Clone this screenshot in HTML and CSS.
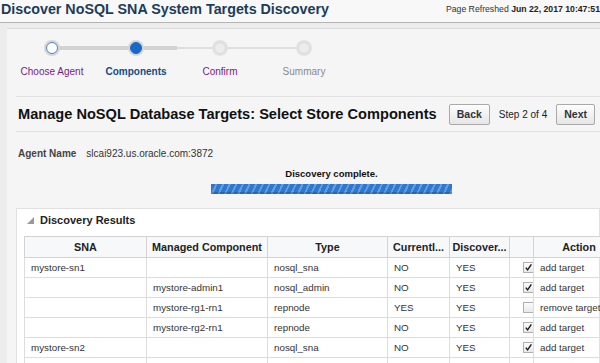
FILE: index.html
```html
<!DOCTYPE html>
<html>
<head>
<meta charset="utf-8">
<link rel="stylesheet" href="styles.css">
</head>
<body>
<div class="topbar">
  <h1 class="title">Discover NoSQL SNA System Targets Discovery</h1>
  <div class="refreshed">Page Refreshed <b>Jun 22, 2017 10:47:51</b></div>
</div>
<div class="content">
  <div class="train">
    <div class="track-done"></div>
    <div class="track-rest"></div>
    <div class="stop visited"><span class="dot"></span><span class="lbl">Choose Agent</span></div>
    <div class="stop current"><span class="dot"></span><span class="lbl">Components</span></div>
    <div class="stop next"><span class="dot"></span><span class="lbl">Confirm</span></div>
    <div class="stop disabled"><span class="dot"></span><span class="lbl">Summary</span></div>
  </div>
  <div class="section">
    <div class="headrow">
      <h2 class="heading">Manage NoSQL Database Targets: Select Store Components</h2>
      <div class="nav">
        <button class="btn">Back</button>
        <span class="step">Step 2 of 4</span>
        <button class="btn">Next</button>
        <button class="btn btn-cut"></button>
      </div>
    </div>
    <div class="agent"><span class="agent-lbl">Agent Name</span><span class="agent-val">slcai923.us.oracle.com:3872</span></div>
    <div class="status">
      <div class="status-text">Discovery complete.</div>
      <div class="bar"></div>
    </div>
  </div>
  <div class="panel">
    <div class="panel-head"><span class="tri"></span>Discovery Results</div>
    <table class="grid">
      <colgroup>
        <col class="c1"><col class="c2"><col class="c3"><col class="c4"><col class="c5"><col class="c6"><col class="c7">
      </colgroup>
      <thead>
        <tr>
          <th>SNA</th><th>Managed Component</th><th>Type</th><th>Currentl...</th><th>Discover...</th><th></th><th>Action</th>
        </tr>
      </thead>
      <tbody>
        <tr><td>mystore-sn1</td><td></td><td>nosql_sna</td><td>NO</td><td>YES</td><td class="cb"><span class="box"><svg viewBox="0 0 11 11"><path d="M2.2 5.6 L4.4 8.4 L9 1.6" fill="none" stroke="#1a1a1a" stroke-width="1.7"/></svg></span></td><td>add target</td></tr>
        <tr><td></td><td>mystore-admin1</td><td>nosql_admin</td><td>NO</td><td>YES</td><td class="cb"><span class="box"><svg viewBox="0 0 11 11"><path d="M2.2 5.6 L4.4 8.4 L9 1.6" fill="none" stroke="#1a1a1a" stroke-width="1.7"/></svg></span></td><td>add target</td></tr>
        <tr><td></td><td>mystore-rg1-rn1</td><td>repnode</td><td>YES</td><td>YES</td><td class="cb"><span class="box"></span></td><td>remove target</td></tr>
        <tr><td></td><td>mystore-rg2-rn1</td><td>repnode</td><td>NO</td><td>YES</td><td class="cb"><span class="box"><svg viewBox="0 0 11 11"><path d="M2.2 5.6 L4.4 8.4 L9 1.6" fill="none" stroke="#1a1a1a" stroke-width="1.7"/></svg></span></td><td>add target</td></tr>
        <tr><td>mystore-sn2</td><td></td><td>nosql_sna</td><td>NO</td><td>YES</td><td class="cb"><span class="box"><svg viewBox="0 0 11 11"><path d="M2.2 5.6 L4.4 8.4 L9 1.6" fill="none" stroke="#1a1a1a" stroke-width="1.7"/></svg></span></td><td>add target</td></tr>
        <tr><td></td><td></td><td></td><td></td><td></td><td class="cb"></td><td></td></tr>
      </tbody>
    </table>
  </div>
</div>
</body>
</html>
```
FILE: styles.css
```css
html, body {
  margin: 0;
  padding: 0;
  overflow: hidden;
  width: 600px;
  height: 363px;
}
body {
  background: #ececec;
  font-family: "Liberation Sans", Arial, sans-serif;
  color: #333;
}
.topbar {
  height: 22px;
  display: flex;
  align-items: flex-start;
  background: #f8f8f8;
  border-bottom: 1px solid #b4b4b4;
  white-space: nowrap;
  overflow: hidden;
}
.title {
  margin: 0 0 0 1px;
  font-size: 14.3px;
  font-weight: bold;
  color: #1d3c5a;
  line-height: 19px;
}
.refreshed {
  font-size: 8.7px;
  color: #333;
  margin-left: auto;
  margin-right: 0;
  padding-top: 4px;
}
.refreshed b { color: #222; }
.content {
  margin: 5px 0 0 7px;
  border-top: 1px solid #dadada;
  background: #f5f5f5;
  height: 400px;
}
.train {
  position: relative;
  display: grid;
  grid-template-columns: repeat(4, 84px);
  padding: 10px 0 0 3px;
  height: 57px;
}
.track-done {
  position: absolute;
  left: 45px;
  top: 17px;
  width: 125px;
  height: 4px;
  background: #d2d2d2;
}
.track-rest {
  position: absolute;
  left: 170px;
  top: 18px;
  width: 130px;
  height: 2px;
  background: #dedede;
}
.stop {
  position: relative;
  display: flex;
  flex-direction: column;
  align-items: center;
}
.dot {
  width: 12px;
  height: 12px;
  border-radius: 50%;
  box-sizing: border-box;
  box-shadow: 0 0 0 2px #d6d6d6;
  margin-top: 3px;
}
.visited .dot { background: #fff; border: 1.5px solid #4d86c6; }
.current .dot { background: #1669c9; border: 1px solid #1669c9; }
.next .dot, .disabled .dot { background: #ececec; border: 1px solid #d9d9d9; box-shadow: 0 0 0 2px #e3e3e3; }
.lbl {
  margin-top: 12px;
  font-size: 10px;
  white-space: nowrap;
}
.visited .lbl, .next .lbl { color: #7a1b7d; }
.current .lbl { color: #134b86; font-weight: bold; }
.disabled .lbl { color: #8a8a8a; }
.section {
  margin-left: 9px;
}
.headrow {
  display: flex;
  align-items: center;
  height: 34px;
  border-top: 1px solid #e0e0e0;
  border-bottom: 1px solid #e0e0e0;
  white-space: nowrap;
  overflow: hidden;
}
.heading {
  margin: 0 0 0 2px;
  font-size: 14.6px;
  font-weight: bold;
  color: #111;
}
.nav {
  display: flex;
  align-items: center;
  margin-left: 12px;
  flex: none;
}
.btn {
  font-family: "Liberation Sans", Arial, sans-serif;
  font-size: 10.5px;
  font-weight: bold;
  color: #333;
  height: 21px;
  padding: 0 7px;
  border: 1px solid #a9a9a9;
  border-radius: 2px;
  background: linear-gradient(#fdfdfd, #e6e6e6);
  margin: 0;
}
.btn-cut {
  width: 40px;
  margin-left: 6px;
}
.step {
  font-size: 10px;
  color: #222;
  margin: 0 9px;
}
.agent {
  padding: 16px 0 0 2px;
  font-size: 10px;
  display: flex;
  gap: 10px;
}
.agent-lbl { font-weight: bold; color: #444; }
.agent-val { color: #333; }
.status {
  display: flex;
  flex-direction: column;
  align-items: flex-start;
  padding-top: 9px;
}
.status-text {
  width: 241px;
  margin-left: 195px;
  text-align: center;
  font-size: 9.5px;
  font-weight: bold;
  color: #111;
}
.bar {
  margin: 5px 0 0 195px;
  width: 241px;
  height: 10px;
  background: repeating-linear-gradient(115deg, #2f78cf 0 4px, #5e9de0 4px 6px);
  box-shadow: inset 0 -2px 0 rgba(0,0,0,0.15);
}
.panel {
  margin: 14px 0 0 9px;
  background: #fff;
  border: 1px solid #e0e0e0;
  padding: 0 0 0 7px;
}
.panel-head {
  height: 22px;
  padding-bottom: 5px;
  display: flex;
  align-items: center;
  font-size: 11px;
  font-weight: bold;
  color: #222;
}
.tri {
  width: 0;
  height: 0;
  border-left: 7px solid transparent;
  border-bottom: 7px solid #999;
  margin: 0 6px 0 3px;
}
.grid {
  border-collapse: collapse;
  table-layout: fixed;
  width: 600px;
  font-size: 9.8px;
  color: #333;
}
.c1 { width: 122px; }
.c2 { width: 121px; }
.c3 { width: 120px; }
.c4 { width: 62px; }
.c5 { width: 60px; }
.c6 { width: 24px; }
.c7 { width: 91px; }
.grid th {
  height: 20px;
  padding: 0;
  background: #f7f8fa;
  font-weight: bold;
  font-size: 10.8px;
  color: #222;
  border: 1px solid #d3d3d3;
  text-align: center;
  white-space: nowrap;
  overflow: hidden;
}
.grid td {
  height: 19px;
  border: 1px solid #dddddd;
  padding: 0 0 0 6px;
  white-space: nowrap;
}
.grid td.cb {
  border-right: none;
  padding: 0 0 0 13px;
}
.box {
  display: block;
  width: 11px;
  height: 11px;
  box-sizing: border-box;
  border: 1px solid #b0b0b0;
  background: linear-gradient(#fcfcfc, #e8e8e8);
}
.box svg { display: block; width: 9px; height: 9px; }
```
